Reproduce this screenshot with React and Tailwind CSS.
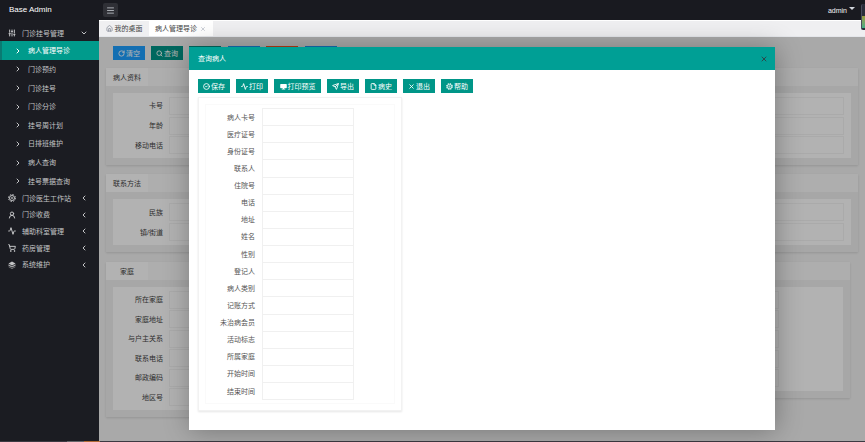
import { useState } from 'react'
import clsx from 'clsx'
import {
    Activity,
    ChevronDown,
    ChevronLeft,
    ChevronRight,
    CircleCheck,
    File,
    House,
    Menu,
    RotateCw,
    Search,
    Send,
    ShoppingCart,
    SlidersVertical,
    UserRound,
    X,
} from 'lucide-react'

const LayersIcon = ({ className }) => (
    <svg viewBox="0 0 16 16" className={className} fill="currentColor">
        <path d="M8 1 15 5 8 9 1 5z" />
        <path d="M1 6.500 8 10.500 15 6.500V9.500L8 13 1 9.500z" opacity=".85" />
        <path d="M1 11 8 14.500 15 11V12L8 16 1 12z" opacity=".7" />
    </svg>
)

const ScreenIcon = ({ className }) => (
    <svg viewBox="0 0 16 16" className={className} fill="currentColor">
        <path d="M2 2h12a1.500 1.500 0 0 1 1.500 1.500v7A1.500 1.500 0 0 1 14 12h-4v1.500h2V15H4v-1.500h2V12H2A1.500 1.500 0 0 1 .5 10.500v-7A1.500 1.500 0 0 1 2 2z" />
    </svg>
)

const GearIcon = ({ className }) => (
    <svg
        viewBox="0 0 16 16"
        className={className}
        fill="none"
        stroke="currentColor"
    >
        <circle cx="8" cy="8" r="5" strokeWidth="2" />
        <circle cx="8" cy="8" r="7" strokeWidth="2" strokeDasharray="3 2.500" />
        <circle cx="8" cy="8" r="1.500" strokeWidth="1.500" />
    </svg>
)

const subItems = [
    '病人管理导诊',
    '门诊预约',
    '门诊挂号',
    '门诊分诊',
    '挂号周计划',
    '日排班维护',
    '病人查询',
    '挂号票据查询',
]

const groups = [
    { label: '门诊医生工作站', icon: GearIcon },
    { label: '门诊收费', icon: UserRound },
    { label: '辅助科室管理', icon: Activity },
    { label: '药房管理', icon: ShoppingCart },
    { label: '系统维护', icon: LayersIcon },
]

const tools = [
    { label: '保存', icon: CircleCheck },
    { label: '打印', icon: Activity },
    { label: '打印预览', icon: ScreenIcon, wide: true },
    { label: '导出', icon: Send },
    { label: '病史', icon: File },
    { label: '退出', icon: X },
    { label: '帮助', icon: GearIcon },
]

const queryFields = [
    '病人卡号',
    '医疗证号',
    '身份证号',
    '联系人',
    '住院号',
    '电话',
    '地址',
    '姓名',
    '性别',
    '登记人',
    '病人类别',
    '记账方式',
    '未治病会员',
    '活动标志',
    '所属家庭',
    '开始时间',
    '结束时间',
]

const Header = () => (
    <header className="flex h-5 shrink-0 items-center bg-[#191a20] text-white">
        <h1 className="w-[99px] shrink-0 pl-[9px] text-[8px] font-medium leading-5">
            Base Admin
        </h1>
        <button
            aria-label="菜单"
            className="ml-1 flex h-3.5 w-[15px] items-center justify-center rounded-xs bg-[#2f3036] text-gray-300"
        >
            <Menu className="size-[9px]" strokeWidth={2} />
        </button>
        <button className="ml-auto mr-[10px] flex items-center gap-0.5 text-[7px] text-gray-100">
            admin
            <span className="mb-1 border-x-[3px] border-t-[3px] border-x-transparent border-t-gray-300" />
        </button>
    </header>
)

const Sidebar = () => {
    const [active, setActive] = useState(subItems[0])

    return (
        <nav className="w-[99px] shrink-0 bg-[#1b1c22] pt-[5px] text-[#c3c4c6]">
            <button className="flex h-4 w-full items-center pl-2 pr-[11px]">
                <SlidersVertical className="size-2" strokeWidth={3} />
                <span className="ml-1.5">门诊挂号管理</span>
                <ChevronDown className="ml-auto size-2" strokeWidth={3} />
            </button>
            <ul className="flex h-[149px] flex-col">
                {subItems.map((label) => (
                    <li key={label} className="flex flex-1">
                        <a
                            href="#"
                            onClick={() => setActive(label)}
                            className={clsx(
                                'flex flex-1 items-center gap-1.5 border-l-2 pt-px pl-3',
                                label === active
                                    ? 'border-[#0a7a72] bg-[#009b8c] text-white'
                                    : 'border-transparent'
                            )}
                        >
                            <ChevronRight
                                className="size-2"
                                strokeWidth={3}
                            />
                            {label}
                        </a>
                    </li>
                ))}
            </ul>
            <div className="flex h-[83px] flex-col">
                {groups.map(({ label, icon: Icon }) => (
                    <button
                        key={label}
                        className="flex w-full flex-1 items-center pl-2 pr-[11px]"
                    >
                        <Icon className="size-2" strokeWidth={3} />
                        <span className="ml-1.5">{label}</span>
                        <ChevronLeft
                            className="ml-auto size-2"
                            strokeWidth={3}
                        />
                    </button>
                ))}
            </div>
        </nav>
    )
}

const TabBar = () => (
    <div className="flex h-[17px] shrink-0 border-y border-t-white border-b-gray-200 bg-[#efeff1] text-[#444]">
        <button className="flex w-[50px] items-center justify-center gap-0.5">
            <House className="size-[7px] text-gray-500" />
            我的桌面
        </button>
        <div className="flex w-16 items-center justify-between bg-white pl-1.5 pr-[7px]">
            <button>病人管理导诊</button>
            <button aria-label="关闭标签">
                <X className="size-1.5 text-gray-400" />
            </button>
        </div>
    </div>
)

const Card = ({ title, fields, height, inset = 'mr-[7px]', className }) => (
    <section
        className={clsx(
            'flex flex-col bg-[#efefef] pb-[7px] shadow-[0_1px_2px_rgba(0,0,0,0.12)]',
            className
        )}
    >
        <div className="flex h-[18px] bg-[#f9f9f9]">
            <h2 className="flex w-[42px] items-center justify-center bg-white">
                {title}
            </h2>
        </div>
        <div
            className={clsx(
                'mx-[7px] mt-[7px] flex flex-col bg-white py-[3px]',
                height
            )}
        >
            {fields.map((label, i) => (
                <label key={i} className="flex flex-1 items-center">
                    <span className="w-[50px] shrink-0 text-right">
                        {label}
                    </span>
                    <input
                        className={clsx(
                            'ml-1.5 h-[18px] min-w-0 flex-1 border border-[#f4f4f4] px-1',
                            inset
                        )}
                    />
                </label>
            ))}
        </div>
    </section>
)

const PatientPage = () => (
    <div className="flex flex-col px-[7px] pt-[9px] text-[#444]">
        <div className="mb-2 flex gap-1.5 pl-[7px] text-white">
            <button className="flex h-3.5 w-8 items-center justify-center gap-px bg-[#1e9fff]">
                <RotateCw className="size-[7px]" strokeWidth={3} />
                清空
            </button>
            <button className="flex h-3.5 w-8 items-center justify-center gap-px bg-[#009688]">
                <Search className="size-[7px]" strokeWidth={3} />
                查询
            </button>
            <button aria-label="新增" className="h-3.5 w-8 bg-[#009688]" />
            <button
                aria-label="修改"
                className="ml-px h-3.5 w-8 bg-[#1e9fff]"
            />
            <button aria-label="删除" className="h-3.5 w-8 bg-[#ff5722]" />
            <button
                aria-label="刷新"
                className="ml-px h-3.5 w-8 bg-[#1e9fff]"
            />
        </div>
        <Card
            title="病人资料"
            fields={['卡号', '年龄', '移动电话']}
            height="h-[65px]"
        />
        <Card
            title="联系方法"
            fields={['民族', '镇/街道']}
            height="h-[46px]"
            className="mt-[9px]"
        />
        <div className="mt-[10px] grid grid-cols-2 items-start gap-2 pr-2">
            <Card
                title="家庭"
                fields={[
                    '所在家庭',
                    '家庭地址',
                    '与户主关系',
                    '联系电话',
                    '邮政编码',
                    '地区号',
                ]}
                height="h-[123px]"
            />
            <Card
                fields={['', '', '', '', '']}
                height="h-[104px]"
                inset="mr-16"
            />
        </div>
    </div>
)

const QueryDialog = ({ onClose }) => (
    <div
        role="dialog"
        aria-label="查询病人"
        className="flex flex-1 flex-col bg-white text-[#555] shadow-[1px_1px_25px_rgba(0,0,0,0.3)]"
    >
        <div className="flex h-[23px] shrink-0 items-center justify-between bg-[#009f95] pl-[9px] pr-[7px] text-white">
            <h2>查询病人</h2>
            <button aria-label="关闭" onClick={onClose}>
                <X className="size-2 text-[#2b4a4c]" strokeWidth={3} />
            </button>
        </div>
        <div className="flex shrink-0 gap-1.5 px-[9px] pt-[9px] text-white">
            {tools.map(({ label, icon: Icon, wide }) => (
                <button
                    key={label}
                    className={clsx(
                        'flex h-3.5 items-center justify-center gap-px bg-[#009688]',
                        wide ? 'w-[47px]' : 'w-8'
                    )}
                >
                    <Icon className="size-[7px]" strokeWidth={3} />
                    {label}
                </button>
            ))}
        </div>
        <form className="mx-[9px] mt-1 mb-[19px] flex w-[204px] flex-1 flex-col border border-[#f2f2f2] p-1.5 shadow-[0_1px_2px_rgba(0,0,0,0.1)]">
            <div className="flex flex-1 flex-col border border-[#fafafa] pt-[3px] pb-1">
                {queryFields.map((label) => (
                    <label key={label} className="flex flex-1">
                        <span className="flex w-[49px] items-center justify-end pt-px">
                            {label}
                        </span>
                        <input className="-mb-px ml-[7px] w-[92px] border border-[#f0f0f0] px-1" />
                    </label>
                ))}
            </div>
        </form>
    </div>
)

export default function App() {
    const [open, setOpen] = useState(true)

    return (
        <div className="relative flex h-screen min-h-[442px] flex-col overflow-hidden font-['Liberation_Sans','Noto_Sans_CJK_SC',sans-serif] text-[7px] leading-[11px]">
            <Header />
            <div className="flex min-h-0 flex-1">
                <Sidebar />
                <main className="flex min-w-0 flex-1 flex-col">
                    <TabBar />
                    <div className="relative flex-1 bg-[#f2f2f2]">
                        <PatientPage />
                        {open && (
                            <div className="absolute inset-0 flex bg-black/30 px-[90px] pt-[10px] pb-[11px]">
                                <QueryDialog onClose={() => setOpen(false)} />
                            </div>
                        )}
                    </div>
                </main>
            </div>
            <footer className="flex h-px shrink-0 bg-[#3c3a42]">
                <span className="ml-[67px] w-[17px] bg-[#66666a]" />
                <span className="w-4 bg-[#b06a35]" />
            </footer>
            <div className="absolute top-1 right-0 h-[26px] w-1 rounded-l-xs border-l border-[#4a4c5c] bg-[#2a2d3a] pt-3">
                <div className="h-3 bg-linear-to-b from-[#9a9a3c] to-[#3fae86]" />
            </div>
        </div>
    )
}
